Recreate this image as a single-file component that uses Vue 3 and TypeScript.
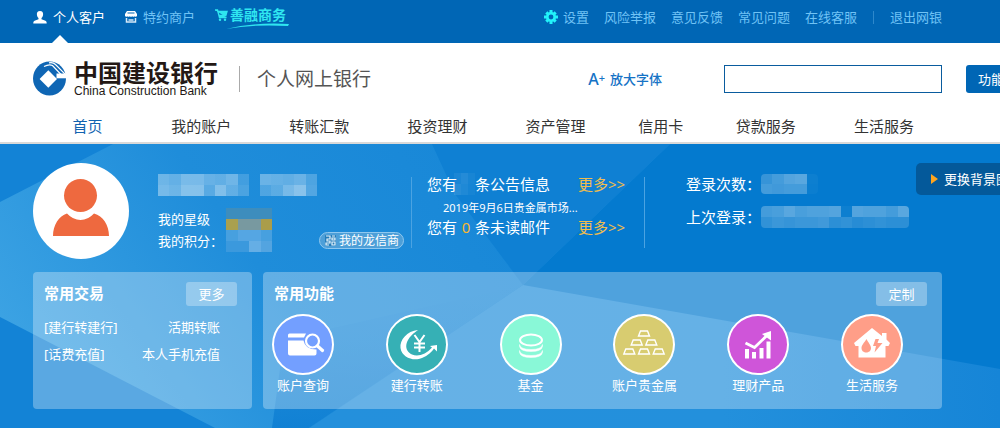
<script setup lang="ts">
type Cells = number[][]

const serviceLinks: string[] = ['风险举报', '意见反馈', '常见问题', '在线客服']
const menu: string[] = ['首页', '我的账户', '转账汇款', '投资理财', '资产管理', '信用卡', '贷款服务', '生活服务']

const masks: Record<string, Cells> = {
  surname: [
    [0.34, 0.3, 0.4, 0.4, 0.32, 0.3, 0.36, 0.16],
    [0.38, 0.34, 0.46, 0.46, 0.26, 0.44, 0.3, 0.2],
  ],
  givenName: [
    [0.34, 0.32, 0.3, 0.34, 0.22],
    [0.22, 0.28, 0.4, 0.48, 0.24],
  ],
  count: [
    [0.05, 0.09, 0.04],
    [0.1, 0.07, 0.03],
  ],
  logins: [
    [0.2, 0.26, 0.32, 0.34, 0.04],
    [0.26, 0.24, 0.26, 0.26, 0.03],
  ],
  lastLogin: [
    [0.26, 0.28, 0.34, 0.28, 0.3, 0.3, 0.32, 0.04, 0.32, 0.3, 0.3, 0.26, 0.34],
    [0.18, 0.22, 0.2, 0.22, 0.22, 0.24, 0.16, 0.18, 0.14, 0.16, 0.18, 0.16, 0.16],
  ],
}

const trades = [
  { kind: '[建行转建行]', name: '活期转账' },
  { kind: '[话费充值]', name: '本人手机充值' },
]

const features = [
  { id: 'query', label: '账户查询' },
  { id: 'transfer', label: '建行转账' },
  { id: 'fund', label: '基金' },
  { id: 'gold', label: '账户贵金属' },
  { id: 'wealth', label: '理财产品' },
  { id: 'life', label: '生活服务' },
]
</script>

<template>
  <div class="page">
    <header class="topbar">
      <nav class="segments">
        <a href="#" class="segment current">
          <svg width="14" height="13" viewBox="0 0 14 13"><path d="M7 0C4.6 0 3.7 1.700 3.900 3.600C4 5.200 4.800 6.500 5.500 7.100V8.300L1.600 9.700C.6 10.100.3 11 .3 12.500H13.700C13.700 11 13.400 10.100 12.400 9.700L8.500 8.300V7.100C9.200 6.500 10 5.200 10.100 3.600C10.300 1.700 9.400 0 7 0Z" fill="#fff" /></svg>
          个人客户
        </a>
        <a href="#" class="segment">
          <svg width="12" height="12" viewBox="0 0 12 12"><path d="M2 0H10L12 3V5Q11 6.500 9.800 5.200Q8.500 6.500 7.200 5.200Q6 6.500 4.800 5.200Q3.500 6.500 2.200 5.200Q1 6.500 0 5V3Z" fill="#fff" /><path d="M1.500 7V11H10.500V7M3.500 9H8.500" fill="none" stroke="#d5e9f8" stroke-width="1.500" /><path d="M2.500 2H9.500" stroke="#0066b5" /></svg>
          特约商户
        </a>
        <a href="#" class="segment shop">
          <svg width="13" height="12" viewBox="0 0 13 12"><path d="M0 1H2.500L4.500 8.500H11.500M2.800 2.500H12L10.800 6.500H4" fill="#2fe6f0" stroke="#2fe6f0" stroke-width="1.400" /><circle cx="5" cy="10.800" r="1.200" fill="#2fe6f0" /><circle cx="10" cy="10.800" r="1.200" fill="#2fe6f0" /></svg>
          <span>善融商务</span>
          <svg class="swoosh" width="64" height="8" viewBox="0 0 64 8"><path d="M0 7Q28 0 63 2L62 4Q28 2 0 7Z" fill="#2fe6f0" /></svg>
        </a>
      </nav>
      <nav class="services">
        <a href="#" class="settings">
          <svg width="14" height="14" viewBox="-7 -7 14 14"><g fill="#22f3fa"><rect x="-1.500" y="-7" width="3" height="14" /><rect x="-7" y="-1.500" width="14" height="3" /><g transform="rotate(45)"><rect x="-1.500" y="-6.600" width="3" height="13.200" /><rect x="-6.600" y="-1.500" width="13.200" height="3" /></g><circle r="5" /></g><circle r="2.400" fill="#0066b5" /></svg>
          设置
        </a>
        <a v-for="link in serviceLinks" :key="link" href="#">{{ link }}</a>
        <i class="bar"></i>
        <a href="#">退出网银</a>
      </nav>
    </header>

    <section class="brand">
      <svg class="mark" width="33" height="35" viewBox="0 0 33 35">
        <ellipse cx="16.500" cy="17.500" rx="16.500" ry="17" fill="#0f66b4" />
        <path d="M23.500 12.500H33V17.300H23.500Z" fill="#fff" />
        <path d="M15.300 9.300L24 18L15.300 26.700L6.600 18Z" fill="#fff" />
        <path d="M11 5.500Q16 3 19.500 4.500L28 13.500M16 1.800Q20 .8 22.500 3.500L33 14" fill="none" stroke="#fff" stroke-width="1.200" />
        <path d="M28 0L33 0V10Q30 4 24 1Z" fill="#fff" />
      </svg>
      <div class="names">
        <strong>中国建设银行</strong>
        <span>China Construction Bank</span>
      </div>
      <h1>个人网上银行</h1>
      <div class="tools">
        <button type="button" class="zoom"><span class="az">A<sup>+</sup></span>放大字体</button>
        <input type="text" aria-label="功能" />
        <button type="button" class="search">功能</button>
      </div>
    </section>

    <nav class="menu">
      <a v-for="(item, i) in menu" :key="item" href="#" :class="{ active: i === 0 }">{{ item }}</a>
    </nav>

    <main class="hero">
      <svg class="backdrop" viewBox="0 0 1000 284" preserveAspectRatio="none" aria-hidden="true">
        <defs>
          <linearGradient id="sweep" x1="0" y1="0.600" x2="1" y2="0.300">
            <stop offset="0" stop-color="#3ba2e3" /><stop offset="0.400" stop-color="#1f8dda" /><stop offset="1" stop-color="#1585d6" />
          </linearGradient>
          <linearGradient id="floor" x1="0" y1="0" x2="1" y2="0">
            <stop offset="0" stop-color="#2490dc" /><stop offset="0.600" stop-color="#2390dc" /><stop offset="1" stop-color="#1685d7" />
          </linearGradient>
          <linearGradient id="fold" x1="0" y1="0" x2="0" y2="1">
            <stop offset="0" stop-color="#1181d4" stop-opacity="0" /><stop offset="1" stop-color="#1181d4" />
          </linearGradient>
        </defs>
        <rect width="1000" height="284" fill="#047acf" />
        <path d="M0 0H670L523 141L309 284H0Z" fill="url(#sweep)" />
        <path d="M0 0H113L0 58Z" fill="#1383d6" />
        <path d="M0 173L215 284H0Z" fill="#1383d6" />
        <path d="M432 0H670L523 141L455 50Z" fill="#0f80d3" />
        <path d="M284 195L523 141L309 284H272Z" fill="url(#fold)" />
        <path d="M309 284L523 141L1000 225V284Z" fill="url(#floor)" />
      </svg>

      <div class="overview">
        <svg class="avatar" width="96" height="96" viewBox="0 0 96 96">
          <circle cx="48" cy="48" r="48" fill="#fff" /><circle cx="47.500" cy="32.500" r="16.500" fill="#ee693f" />
          <path d="M20 73C20 62 26 53 34 50.500Q40 57 47.500 57Q55 57 61 50.500C70 53 76 62 76 73Z" fill="#ee693f" />
        </svg>

        <div class="profile">
          <div class="masked-name">
            <svg v-for="key in ['surname', 'givenName']" :key="key" :width="masks[key][0].length * 11.400" height="22" :viewBox="`0 0 ${masks[key][0].length} 2`" preserveAspectRatio="none" shape-rendering="crispEdges">
              <template v-for="(row, y) in masks[key]" :key="y"><rect v-for="(a, x) in row" :key="x" :x="x" :y="y" width="1" height="1" fill="#fff" :fill-opacity="a" /></template>
            </svg>
          </div>
          <div class="details">
            <div class="labels"><div>我的星级</div><div>我的积分：</div></div>
            <svg width="46" height="44" viewBox="0 0 4 4" preserveAspectRatio="none" shape-rendering="crispEdges">
              <rect width="4" height="1" fill="#3d8dbd" /><rect y="1" width="1" height="1" fill="#a9a04f" /><rect x="1" y="1" width="2" height="1" fill="#7899a0" /><rect x="3" y="1" width="1" height="1" fill="#aa9d4a" />
              <rect y="2" width="4" height="1" fill="#47a0df" /><rect x="1" y="2" width="2" height="1" fill="#55a6e3" /><rect y="3" width="2" height="1" fill="#3b99dd" /><rect x="2" y="3" width="1" height="1" fill="#65aee5" /><rect x="3" y="3" width="1" height="1" fill="#53a4e0" />
            </svg>
            <button type="button" class="badge">
              <svg width="11" height="11" viewBox="0 0 11 11"><rect width="11" height="11" rx="1" fill="#247cb9" /><path d="M1 1H5V4H2V6H5V8H1V10H4M7 1H10M7 3H10V5H7ZM7 7H10V10H7Z" fill="none" stroke="#e8f5fd" stroke-width="1.200" /></svg>
              我的龙信商
            </button>
          </div>
        </div>

        <div class="notices">
          <div class="notice">
            <span>您有</span>
            <svg width="21" height="22" viewBox="0 0 3 2" preserveAspectRatio="none" shape-rendering="crispEdges">
              <template v-for="(row, y) in masks.count" :key="y"><rect v-for="(a, x) in row" :key="x" :x="x" :y="y" width="1" height="1" fill="#fff" :fill-opacity="a" /></template>
            </svg>
            <span>条公告信息</span><a href="#">更多&gt;&gt;</a>
          </div>
          <div class="headline">2019年9月6日贵金属市场...</div>
          <div class="notice"><span>您有</span><b>0</b><span>条未读邮件</span><a href="#">更多&gt;&gt;</a></div>
        </div>

        <dl class="logins">
          <dt>登录次数：</dt>
          <dd>
            <svg width="57" height="20" viewBox="0 0 5 2" preserveAspectRatio="none" shape-rendering="crispEdges">
              <template v-for="(row, y) in masks.logins" :key="y"><rect v-for="(a, x) in row" :key="x" :x="x" :y="y" width="1" height="1" fill="#fff" :fill-opacity="a" /></template>
            </svg>
          </dd>
          <dt>上次登录：</dt>
          <dd>
            <svg width="148" height="22" viewBox="0 0 13 2" preserveAspectRatio="none" shape-rendering="crispEdges">
              <template v-for="(row, y) in masks.lastLogin" :key="y"><rect v-for="(a, x) in row" :key="x" :x="x" :y="y" width="1" height="1" fill="#fff" :fill-opacity="a" /></template>
            </svg>
          </dd>
        </dl>

        <button type="button" class="switcher">
          <svg width="7" height="10" viewBox="0 0 7 10"><path d="M0 0L7 5L0 10Z" fill="#ffa51e" /></svg>
          更换背景图
        </button>
      </div>

      <div class="panels">
        <section class="panel trades">
          <header><h2>常用交易</h2><button type="button">更多</button></header>
          <ul>
            <li v-for="t in trades" :key="t.kind"><span>{{ t.kind }}</span><a href="#">{{ t.name }}</a></li>
          </ul>
        </section>
        <section class="panel functions">
          <header><h2>常用功能</h2><button type="button">定制</button></header>
          <div class="icons">
            <a v-for="f in features" :key="f.id" href="#" class="feature">
              <span class="disc" :class="f.id">
                <svg width="56" height="56" viewBox="0 0 56 56" fill="none" stroke="#fff">
                  <template v-if="f.id === 'query'">
                    <path d="M13 18Q13 16.500 14.500 16.500H31L29 20.500H13ZM13 23.500H28.500Q30 32.500 41.500 32.500V36.500Q41.500 38.500 39.500 38.500H15Q13 38.500 13 36.500Z" fill="#fff" stroke="none" />
                    <circle cx="37.500" cy="24" r="6.500" stroke-width="2.200" /><path d="M42.500 29L47.500 33.500" stroke-width="3.200" stroke-linecap="round" />
                  </template>
                  <template v-else-if="f.id === 'transfer'">
                    <path d="M29 13C18 14 10.500 23 11.500 31C13 41 25 44.500 33 41C39 38.500 43 34.500 45 31.500L48 34.500V28L41 29L43 30.500C37 37.500 29 40 23 37.500C15 34 14 23 29 13Z" fill="#fff" stroke="none" />
                    <path d="M25.500 18L30.500 25L35.500 18M30.500 25V35M25 26.500H36M25 30.500H36" stroke-width="2" />
                  </template>
                  <template v-else-if="f.id === 'fund'">
                    <ellipse cx="28" cy="23" rx="11" ry="5.500" stroke-width="2" />
                    <path d="M16.500 27.500Q17.500 32.500 28 32.500Q38.500 32.500 39.500 27.500V29.500Q38.500 34.500 28 34.500Q17.500 34.500 16.500 29.500ZM16.500 33.500Q17.500 38.500 28 38.500Q38.500 38.500 39.500 33.500V35.500Q38.500 40.500 28 40.500Q17.500 40.500 16.500 35.500Z" fill="#fff" stroke-width=".5" />
                  </template>
                  <g v-else-if="f.id === 'gold'" stroke-width="1.400">
                    <path v-for="(p, i) in [[28, 19], [20.700, 28], [35.300, 28], [13.300, 37], [28, 37], [42.700, 37]]" :key="i" :d="`M${p[0] - 3.500} ${p[1] - 5}h7l2 5h-11z`" />
                  </g>
                  <template v-else-if="f.id === 'wealth'">
                    <path d="M15 32H19V41.500H15ZM22 35H26V41.500H22ZM29.500 31H33.500V41.500H29.500ZM36.500 24.500H40.500V41.500H36.500Z" fill="#fff" stroke="none" />
                    <path d="M15.500 26L24.500 30.500L37 18.500" stroke-width="2.800" /><path d="M32 17L41 14V23.500Z" fill="#fff" stroke="none" />
                  </template>
                  <template v-else>
                    <path d="M28 11L38 19V16H42.500V22.500L46 26L44.500 29H41.500V40.500H14.500V29H11.500L10 26Z" fill="#fff" stroke="none" />
                    <path d="M22.500 22C20 26 17.500 28 17.500 31C17.500 37 27 37 27 31C27 28 24.500 26 22.500 22ZM31.500 22H35L33.500 26H38.500L30.500 35.500L32 29H29Z" fill="#ff9e88" stroke="none" />
                  </template>
                </svg>
              </span>
              <span class="caption">{{ f.label }}</span>
            </a>
          </div>
        </section>
      </div>
    </main>
  </div>
</template>

<style>
body {
  margin: 0;
  background: #fff;
}
</style>

<style scoped>
.page {
  overflow: hidden;
  font-family: "Noto Sans", "Noto Sans CJK SC", sans-serif;
  font-size: 13px;
  line-height: 20px;
  color: #333;
  white-space: nowrap;
}
a {
  color: inherit;
  text-decoration: none;
}
button {
  font: inherit;
  color: inherit;
  border: 0;
  padding: 0;
  background: none;
  cursor: pointer;
}
svg {
  display: block;
  flex: none;
}
.topbar {
  display: flex;
  justify-content: space-between;
  height: 43px;
  padding: 0 58px 0 33px;
  background: #0066b5;
  color: #70c3f5;
}
.segments,
.services,
.segment,
.settings {
  display: flex;
}
.segments {
  gap: 20px;
}
.segment {
  position: relative;
  align-items: center;
  gap: 6px;
  height: 34px;
}
.segment.current {
  color: #fff;
}
.segment.current::after {
  content: "";
  position: absolute;
  left: 19px;
  top: 35px;
  border: 8px solid transparent;
  border-top: 0;
  border-bottom-color: #fff;
}
.shop {
  gap: 2px;
  height: 30px;
  color: #2fe6f0;
  font-size: 14px;
  font-weight: 700;
}
.swoosh {
  position: absolute;
  left: 11px;
  top: 22px;
}
.services {
  align-items: center;
  height: 34px;
  gap: 15px;
}
.settings {
  align-items: center;
  gap: 5px;
}
.bar {
  width: 1px;
  height: 13px;
  margin: 0 1px;
  background: #2e88cb;
}
.brand {
  display: flex;
  align-items: center;
  height: 71px;
  padding: 0 58px 0 33px;
}
.names {
  display: flex;
  flex-direction: column;
  margin-left: 8px;
  color: #231815;
}
.names strong {
  font-size: 24px;
  line-height: 24px;
  font-weight: 700;
}
.names span {
  font-family: "Liberation Sans", Arial, sans-serif;
  font-size: 12px;
  line-height: 12px;
}
h1 {
  margin: 0 0 0 21px;
  padding-left: 17px;
  border-left: 1px solid #aaa;
  font-size: 19px;
  line-height: 26px;
  font-weight: 400;
  color: #555;
}
.tools {
  flex: 1;
  display: flex;
  align-items: center;
  justify-content: flex-end;
}
.zoom {
  display: flex;
  gap: 5px;
  margin-right: 62px;
  color: #1673c6;
  font-weight: 500;
}
.az {
  font-size: 16px;
}
.az sup {
  font-size: 11px;
  line-height: 0;
  vertical-align: 3px;
}
.tools input {
  box-sizing: border-box;
  width: 218px;
  height: 28px;
  border: 1px solid #0a5c9e;
  background: #fff;
  font: inherit;
}
.search {
  flex: none;
  width: 80px;
  height: 28px;
  margin: 0 -104px 0 24px;
  padding-left: 12px;
  border-radius: 3px;
  background: #0066b5;
  color: #fff;
  text-align: left;
}
.menu {
  display: grid;
  grid-template-columns: 109fr repeat(4, 118fr) 92fr repeat(2, 118fr);
  padding: 0 57px 0 33px;
  height: 28px;
  border-bottom: 2px solid #d9d9d9;
  font-size: 15px;
  line-height: 24px;
  text-align: center;
}
.menu .active {
  color: #1263b0;
}
.hero {
  position: relative;
  overflow: hidden;
  padding: 19px 58px 19px 33px;
  color: #fff;
}
.backdrop {
  position: absolute;
  inset: 0;
  width: 100%;
  height: 100%;
}
.overview,
.panels {
  position: relative;
  display: flex;
}
.overview {
  margin-right: -58px;
}
.avatar {
  margin-right: 29px;
}
.profile {
  box-sizing: border-box;
  width: 253px;
  padding: 11px 7px 0 0;
}
.masked-name {
  display: flex;
  gap: 11px;
}
.details {
  display: flex;
  margin-top: 12px;
  line-height: 22px;
}
.labels {
  width: 68px;
}
.badge {
  display: flex;
  align-items: center;
  align-self: flex-end;
  gap: 3px;
  height: 17px;
  margin: 0 0 3px auto;
  padding: 0 4px 0 5px;
  border: 1px solid #8fc8ef;
  border-radius: 9px;
  background: #4d9fd8;
  font-size: 12px;
  line-height: 15px;
}
.notices {
  box-sizing: border-box;
  width: 234px;
  height: 71px;
  margin-top: 14px;
  padding-left: 15px;
  border: solid #4ba3e2;
  border-width: 0 1px;
}
.notice {
  display: flex;
  align-items: center;
  height: 14px;
  font-size: 15px;
}
.notice svg {
  margin: 0 0 0 -3px;
}
.notice b {
  width: 18px;
  color: #f7b733;
  font-weight: 400;
  text-align: center;
}
.notice a {
  margin-left: 28px;
  color: #f0bd4e;
}
.headline {
  margin: 8px 0 3px 16px;
  font-size: 11px;
  line-height: 18px;
}
.logins {
  flex: 1;
  display: grid;
  grid-template-columns: 75px auto;
  grid-auto-rows: 22px;
  row-gap: 11px;
  align-items: center;
  align-content: start;
  margin: 10px 0 0 41px;
  font-size: 15px;
}
.logins dd {
  margin: 0;
}
.logins svg {
  border-radius: 4px;
}
.switcher {
  display: flex;
  align-items: center;
  align-self: flex-start;
  gap: 6px;
  height: 32px;
  margin-right: -20px;
  padding: 0 11px 0 15px;
  border-radius: 5px;
  background: #04599a;
}
.panels {
  gap: 11px;
  margin-top: 13px;
}
.panel {
  box-sizing: border-box;
  height: 137px;
  border-radius: 4px;
  background: rgba(255, 255, 255, 0.3);
}
.trades {
  width: 219px;
}
.functions {
  flex: 1;
}
.panel header {
  display: flex;
  justify-content: space-between;
  align-items: center;
  padding: 10px 15px 0 11px;
}
h2 {
  margin: 0 0 2px;
  font-size: 15px;
  font-weight: 700;
}
.panel button {
  width: 51px;
  height: 24px;
  border-radius: 3px;
  background: rgba(255, 255, 255, 0.3);
}
.trades ul {
  margin: 8px 32px 0 11px;
  padding: 0;
  list-style: none;
}
.trades li {
  display: flex;
  justify-content: space-between;
  line-height: 27px;
}
.icons {
  display: flex;
  justify-content: space-between;
  margin: 8px 39px 0 9px;
}
.feature {
  display: flex;
  flex-direction: column;
  align-items: center;
  width: 62px;
}
.disc {
  display: grid;
  place-items: center;
  box-sizing: border-box;
  width: 62px;
  height: 61px;
  border: 2px solid #fff;
  border-radius: 50%;
}
.query { background: #739fff; }
.transfer { background: #36b0b5; }
.fund { background: #89f8d7; }
.gold { background: #d8cc70; }
.wealth { background: #cf55d9; }
.life { background: #ff9e88; }
</style>
